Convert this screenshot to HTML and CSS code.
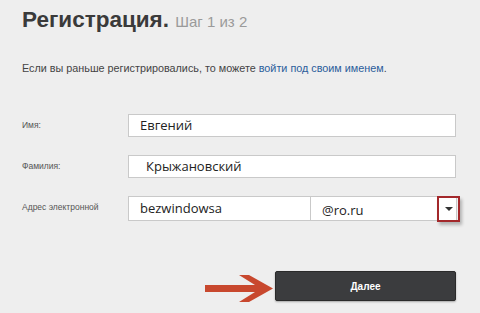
FILE: index.html
```html
<!DOCTYPE html>
<html lang="ru">
<head>
    <meta charset="UTF-8">
    <title>Регистрация</title>
    <link rel="stylesheet" href="styles.css">
</head>
<body>
<div class="page">
    <h1 class="title">Регистрация. <span class="step">Шаг 1 из 2</span></h1>
    <p class="intro">Если вы раньше регистрировались, то можете <a href="#">войти под своим именем</a>.</p>

    <div class="row row-first">
        <label class="label">Имя:</label>
        <div class="field"><span class="value">Евгений</span></div>
    </div>
    <div class="row">
        <label class="label">Фамилия:</label>
        <div class="field"><span class="value value-shift">Крыжановский</span></div>
    </div>
    <div class="row">
        <label class="label">Адрес электронной</label>
        <div class="field field-mail">
            <span class="value">bezwindowsa</span>
        </div>
        <div class="field field-domain">
            <span class="value value-low">@ro.ru</span>
            <span class="drop"><span class="caret"></span></span>
        </div>
    </div>

    <div class="actions">
        <svg class="arrow" width="70" height="28" viewBox="0 0 70 28">
            <path d="M0 10 L50 10 L34 0 L44 0 L68 13.5 L44 27 L34 27 L50 17 L0 17 Z" fill="#c8482e"/>
        </svg>
        <button class="next">Далее</button>
    </div>
</div>
</body>
</html>
```

FILE: styles.css
```css
body {
    margin: 0;
    background-color: #eeeeee;
    font-family: "Liberation Sans", Arial, sans-serif;
    color: #333;
}
.page {
    width: 480px;
    height: 313px;
    padding: 0 0 0 22px;
    box-sizing: border-box;
    overflow: hidden;
}
.title {
    margin: 0;
    padding-top: 5px;
    font-size: 22.5px;
    font-weight: bold;
    color: #3a3a3a;
    line-height: 30px;
}
.step {
    font-size: 15px;
    font-weight: normal;
    color: #9a9a9a;
}
.intro {
    margin: 24px 0 0 0;
    font-size: 10.8px;
    color: #444;
    line-height: 14px;
}
.intro a {
    color: #2b5d9b;
    text-decoration: none;
}
.row {
    display: flex;
    align-items: flex-start;
    margin-top: 18px;
}
.row-first {
    margin-top: 39px;
}
.label {
    width: 106px;
    font-size: 8.5px;
    color: #555;
    padding-top: 6px;
}
.field {
    position: relative;
    width: 326px;
    height: 21px;
    background-color: #fff;
    border: 1px solid #c9c9c9;
    font-family: "Open Sans", "DejaVu Sans", sans-serif;
    font-size: 13px;
    color: #222;
    line-height: 21px;
}
.value {
    padding-left: 11px;
}
.value-shift {
    padding-left: 17px;
}
.field-mail {
    width: 181px;
    height: 23px;
    line-height: 23px;
}
.field-domain {
    width: 145px;
    height: 23px;
    border-left: none;
    line-height: 26px;
}
.value-low {
    padding-left: 11px;
}
.drop {
    position: absolute;
    right: -4px;
    top: -1px;
    width: 19px;
    height: 22px;
    border: 2px solid #a3282b;
    box-shadow: 2px 3px 3px rgba(0, 0, 0, 0.25);
}
.caret {
    position: absolute;
    left: 6px;
    top: 9px;
    border-left: 4px solid transparent;
    border-right: 4px solid transparent;
    border-top: 4px solid #333;
}
.actions {
    display: flex;
    align-items: center;
    margin-top: 48px;
    margin-left: 183px;
}
.arrow {
    display: block;
    margin-top: 6px;
}
.next {
    width: 181px;
    height: 30px;
    margin: 0;
    background-color: #3b3c3e;
    color: #fff;
    border: 1px solid #2a2a2a;
    border-radius: 2px;
    font-family: "Liberation Sans", Arial, sans-serif;
    font-size: 10px;
    font-weight: bold;
    box-shadow: 0 1px 2px rgba(0, 0, 0, 0.3);
}
```
